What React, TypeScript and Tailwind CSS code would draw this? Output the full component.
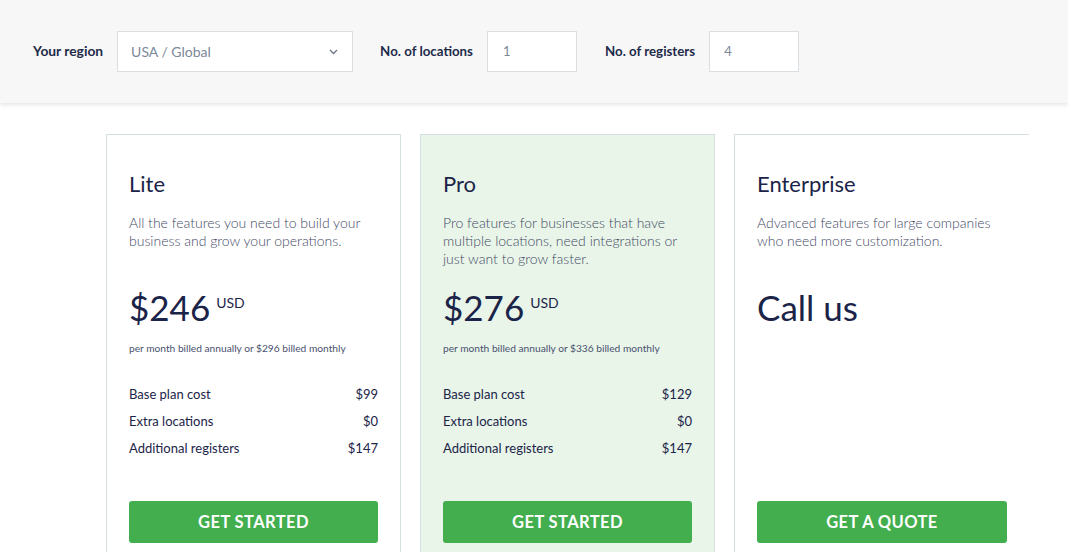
import React from "react"

type Plan = {
  name: string
  desc: string
  price?: string
  billed?: string
  rows?: [string, string][]
  cta: string
  highlight?: boolean
}

const plans: Plan[] = [
  {
    name: "Lite",
    desc: "All the features you need to build your business and grow your operations.",
    price: "$246",
    billed: "per month billed annually or $296 billed monthly",
    rows: [
      ["Base plan cost", "$99"],
      ["Extra locations", "$0"],
      ["Additional registers", "$147"],
    ],
    cta: "Get started",
  },
  {
    name: "Pro",
    desc: "Pro features for businesses that have multiple locations, need integrations or just want to grow faster.",
    price: "$276",
    billed: "per month billed annually or $336 billed monthly",
    rows: [
      ["Base plan cost", "$129"],
      ["Extra locations", "$0"],
      ["Additional registers", "$147"],
    ],
    cta: "Get started",
    highlight: true,
  },
  {
    name: "Enterprise",
    desc: "Advanced features for large companies who need more customization.",
    cta: "Get a quote",
  },
]

function PlanCard({ plan, last }: { plan: Plan; last?: boolean }) {
  return (
    <div
      className={`flex h-[440px] w-[295px] shrink-0 flex-col border border-[#d6dfdf] px-[22px] pb-[30px] pt-[35px] ${
        plan.highlight ? "bg-[#e8f5e8]" : "bg-white"
      } ${last ? "border-r-0" : ""}`}
    >
      <h2 className="text-[22px] leading-[28px] text-[#1b2448]">{plan.name}</h2>
      <p className="mt-4 h-[54px] text-[14px] font-light leading-[18px] text-[#434a66]">{plan.desc}</p>

      {plan.price ? (
        <>
          <div className="mt-[17px] flex h-[44px] items-center text-[#1b2448]">
            <span className="text-[35px] leading-[44px]">{plan.price}</span>
            <span className="ml-[6px] self-start pt-[9px] text-[14px] leading-[18px]">USD</span>
          </div>
          <p className="mt-[12px] text-[10.2px] leading-[14px] text-[#4a5170]">{plan.billed}</p>
          <div className="mt-[26px] flex flex-col text-[13px] text-[#1b2448]">
            {plan.rows?.map(([label, value]) => (
              <div key={label} className="flex justify-between leading-[27px]">
                <span>{label}</span>
                <span>{value}</span>
              </div>
            ))}
          </div>
        </>
      ) : (
        <div className="mt-[17px] h-[44px] text-[35px] leading-[44px] text-[#1b2448]">Call us</div>
      )}

      <button className="mt-auto h-[42px] w-full rounded-[3px] bg-[#42ae4e] text-[16.5px] font-bold uppercase tracking-[0.4px] text-white">
        {plan.cta}
      </button>
    </div>
  )
}

export default function App() {
  return (
    <div className="h-[552px] w-full overflow-hidden bg-white font-['Lato','Liberation_Sans',sans-serif]">
      {/* Controls */}
      <div className="relative z-10 flex h-[103px] items-center bg-[#f7f7f7] pl-[33px] shadow-[0_2px_4px_rgba(0,0,0,0.1)]">
        <label className="text-[13.8px] font-bold text-[#1e2a4a]">Your region</label>
        <div className="ml-[14px] flex h-[41px] w-[236px] items-center justify-between border border-[#d9dfe2] bg-white pl-[13px] pr-[14px] text-[14px] text-[#7c8899]">
          <span>USA / Global</span>
          <svg width="9" height="6" viewBox="0 0 9 6" fill="none">
            <path d="M1 1l3.5 3.5L8 1" stroke="#6b7785" strokeWidth="1.3" />
          </svg>
        </div>

        <label className="ml-[27px] text-[13.3px] font-bold text-[#1e2a4a]">No. of locations</label>
        <div className="ml-[14px] flex h-[41px] w-[90px] items-center border border-[#d9dfe2] bg-white pl-[15px] text-[13px] text-[#7c8899]">
          1
        </div>

        <label className="ml-[28px] text-[13.3px] font-bold text-[#1e2a4a]">No. of registers</label>
        <div className="ml-[14px] flex h-[41px] w-[90px] items-center border border-[#d9dfe2] bg-white pl-[14px] text-[13px] text-[#7c8899]">
          4
        </div>
      </div>

      {/* Plans */}
      <div className="ml-[106px] mt-[31px] flex gap-[19px]">
        {plans.map((p, i) => (
          <PlanCard key={p.name} plan={p} last={i === plans.length - 1} />
        ))}
      </div>
    </div>
  )
}
